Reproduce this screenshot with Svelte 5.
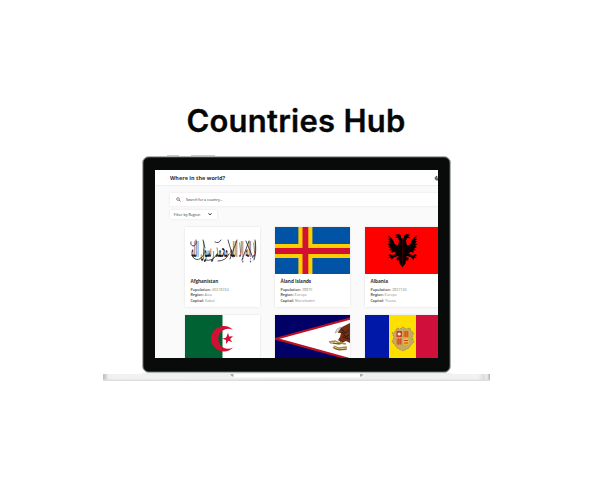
<script>
  const countries = [
    { name: 'Afghanistan', flag: 'af', population: '40218234', region: 'Asia', capital: 'Kabul' },
    { name: 'Åland Islands', flag: 'ax', population: '28875', region: 'Europe', capital: 'Mariehamn' },
    { name: 'Albania', flag: 'al', population: '2837743', region: 'Europe', capital: 'Tirana' },
    { flag: 'dz' },
    { flag: 'as' },
    { flag: 'ad' }
  ];
</script>

<main>
  <h1>Countries Hub</h1>
  <div class="laptop">
    <div class="buttons"><i></i><i></i></div>
    <div class="lid">
      <div class="screen">
        <header>
          <b>Where in the world?</b>
          <svg class="moon" width="6" height="6" viewBox="0 0 6 6"><path d="M3 1.200A2 2 0 1 0 4.800 4.200Q2.400 4.200 3 1.200Z" fill="#777" stroke="#111" stroke-width=".5" /></svg>
        </header>
        <div class="search">
          <svg width="5" height="5" viewBox="0 0 5 5"><circle cx="2" cy="2" r="1.4" fill="none" stroke="#444" stroke-width=".55" /><path d="M3 3L4.6 4.6" stroke="#444" stroke-width=".65" /></svg>
          <span>Search for a country...</span>
        </div>
        <div class="filter">
          <span>Filter by Region</span>
          <svg width="4" height="4" viewBox="0 0 4 4"><path d="M.4 1.200L2 3L3.6 1.200" fill="none" stroke="#222" stroke-width=".8" /></svg>
        </div>
        <div class="grid">
          {#each countries as c}
            <article>
              <svg class="flag" viewBox="0 0 75 47" preserveAspectRatio="none">
                {#if c.flag === 'af'}
                  <rect width="75" height="47" fill="#fff" />
                  <g transform="translate(6 29.5) scale(1 1.55)">
                    <text class="script" textLength="65" lengthAdjust="spacingAndGlyphs">لا إله إلا الله محمد رسول الله</text>
                  </g>
                  <g fill="none" stroke="#222" stroke-width=".8" stroke-linecap="round">
                    <path d="M7 29Q11 35 16 31Q20 28 19 22M20 33Q28 35 32 27M33 34Q41 34 44 27" />
                    <path d="M6 15Q5 18 8 19Q12 19 11 13M18 13L20 21M30 15Q34 17 36 13M43 13L48 30M52 13L45 32M64 14L57 33M61 14L68 31M70 13Q72 24 69 33" />
                  </g>
                {:else if c.flag === 'ax'}
                  <rect width="75" height="47" fill="#0053a5" />
                  <path d="M30.4 0V47M0 24H75" stroke="#ffce00" stroke-width="14" />
                  <path d="M30.4 0V47M0 24H75" stroke="#d21034" stroke-width="5.8" />
                {:else if c.flag === 'al'}
                  <rect width="75" height="47" fill="#f00" />
                  <g fill="#090000">
                    {#each [1, -1] as side}
                      <path transform={side === -1 ? 'translate(75 0) scale(-1 1)' : undefined} d="M37.6 12L36 10.500L36 8.500L33.500 7L29.500 8L32 9L30 11L33 11L34 14L33 18.500L30 17.500L28 13L25.500 10L23 8.500L25 12L22.500 11.500L25 14L22.500 14L25 16.500L22.500 17L25 19L23 20L26 21.500L24 23L27 23.500L26 25.500L30 25L31 27L27 28.200L24.500 27L23 29L25.500 29L23 31L26 30.500L26.500 33L28.500 30.500L33 29L34 30L31.500 31L32 34L34 33L34.500 36.500L37.600 40.500Z" />
                    {/each}
                  </g>
                {:else if c.flag === 'dz'}
                  <rect width="75" height="47" fill="#fff" /><rect width="37.500" height="47" fill="#006233" />
                  <path d="M48 15A12.700 12.700 0 1 0 48 32.600A10 10 0 1 1 48 15Z" fill="#d21034" />
                  <path d="M43 17.700L44.100 21.600L48 21.200L45.100 23.900L47.200 27.300L43.600 25.800L41 28.900L41.100 25L37.200 23.700L41.200 22.400Z" fill="#d21034" />
                {:else if c.flag === 'as'}
                  <rect width="75" height="47" fill="#006" />
                  <path d="M1 23.800L78 2.700V45Z" fill="#fff" stroke="#bd1021" stroke-width="2.200" />
                  <path d="M75 8L71 10L67 12L64 15L63 18L66 18L65 22L63 25L67 28L71 26L75 28Z" fill="#713015" />
                  <path d="M66 13L70 18L74 15M67 17L71 22L74 20M68 22L75 24" fill="none" stroke="#2f1009" stroke-width=".8" />
                  <path d="M66 12L62 14L60 18L64 16Z" fill="#ddd" stroke="#666" stroke-width=".4" />
                  <path d="M54 27L60 26L65 28L71 29M58 28L64 29L67 27" fill="none" stroke="#ad8a36" stroke-width="1.300" />
                  <path d="M58 32Q62 36 72 34M59 31L64 33L72 32" fill="none" stroke="#ad8a36" stroke-width="1.300" />
                  <path d="M55 28L66 29M59 33L64 35L71 34" fill="none" stroke="#493917" stroke-width=".6" />
                {:else}
                  <rect width="75" height="47" fill="#0018a8" /><rect x="24" width="27" height="47" fill="#fedf00" /><rect x="51" width="24" height="47" fill="#d0103a" />
                  <path d="M32 13L35 14L38 12L41 14L45 13L46 16L49 18L47 22L49 27L46 30L44 33L38 36L32 33L30 30L27 27L29 22L27 18L30 17Z" fill="#c4aa62" stroke="#a48846" stroke-width=".8" stroke-dasharray="2 1" />
                  <rect x="31.500" y="16" width="5.500" height="6" fill="#d9303b" /><circle cx="34.200" cy="19" r="1.600" fill="#fff0bd" />
                  <rect x="38.500" y="16" width="5" height="6" fill="#e37321" /><path d="M40.300 16V22M42.300 16V22" stroke="#b74c24" stroke-width=".7" />
                  <rect x="31.500" y="23.500" width="5.500" height="6" fill="#e37321" /><path d="M33.300 23.500V29.500M35.300 23.500V29.500" stroke="#c23b20" stroke-width=".7" />
                  <rect x="38.500" y="23.500" width="5" height="6" fill="#f2c71c" /><path d="M39 25.500H43M39 28H43" stroke="#cc3b22" />
                {/if}
              </svg>
              {#if c.name}
                <div class="info">
                  <h2>{c.name}</h2>
                  <p><b>Population:</b> {c.population}</p>
                  <p><b>Region:</b> {c.region}</p>
                  <p><b>Capital:</b> {c.capital}</p>
                </div>
              {/if}
            </article>
          {/each}
        </div>
      </div>
    </div>
    <div class="hinge"></div>
    <div class="base">
      <svg width="387" height="7" viewBox="0 0 387 7">
        <rect x="130" y="0" width="128" height="3.500" fill="#fff" />
        <path d="M127.500 0H130.500V3L128 1.500Z" fill="#aaa" /><path d="M257 0H260L259.500 1.500L257 3Z" fill="#aaa" />
      </svg>
    </div>
  </div>
</main>

<style>
  :global(body) { margin: 0; background: #fff; }
  main { width: 592px; height: 480px; overflow: hidden; background: #fff; display: flex; flex-direction: column; align-items: center; box-sizing: border-box; padding-top: 100px; }
  h1 { margin: 0; height: 41px; font: 600 31px/41px Inter, sans-serif; letter-spacing: .25px; color: #050706; white-space: nowrap; -webkit-text-stroke: .3px #050706; }
  .laptop { width: 387px; padding-top: 14px; display: flex; flex-direction: column; align-items: center; }
  .buttons { width: 308px; height: 1px; display: flex; gap: 12px; padding-left: 25px; box-sizing: border-box; }
  .buttons i { width: 12px; height: 1px; background: #c8cbcb; }
  .buttons i + i { width: 24px; }
  .lid { width: 309px; height: 217px; box-sizing: border-box; border: 1px solid #aeb2b1; border-radius: 7px; background: #080b0a; padding: 13px 12px 14px; box-shadow: inset 0 0 0 .5px #666; }
  .screen { width: 283px; height: 188px; overflow: hidden; background: #fafafa; font-family: "Open Sans", sans-serif; color: #333; }
  header { height: 15px; background: #fff; box-shadow: 0 .5px 1.5px #ddd; display: flex; align-items: center; padding-left: 15.500px; font-size: 5.500px; width: 290px; box-sizing: border-box; }
  header b { width: 264px; font-weight: 700; }
  .moon { flex: none; }
  .search { margin: 7.500px 0 0 15px; width: 285px; height: 13.500px; box-sizing: border-box; background: #fff; box-shadow: 0 0 2px #e5e5e5; display: flex; align-items: center; padding-left: 6px; gap: 5.500px; font-size: 3.600px; }
  .filter { margin: 3.500px 0 0 15px; width: 47px; height: 9.500px; box-sizing: border-box; background: #fff; box-shadow: 0 0 2px #e2e2e2; display: flex; align-items: center; justify-content: space-between; padding: 0 5px 0 4.300px; font-size: 3.700px; white-space: nowrap; }
  .grid { margin: 7.500px 0 0 30px; width: 256px; display: grid; grid-template-columns: repeat(3, 75px); column-gap: 15px; row-gap: 7.500px; }
  article { height: 80.500px; background: #fff; box-shadow: 0 0 2px #ddd; }
  .flag { display: block; width: 75px; height: 47px; }
  .script { font: 400 14px "DejaVu Sans", sans-serif; fill: #111; }
  .info { padding: 4px 6px; }
  h2 { margin: 0 0 3px; font-size: 4.700px; line-height: 6px; letter-spacing: -.05px; white-space: nowrap; }
  p { margin: 0; font-size: 3.700px; line-height: 5.700px; color: #888; white-space: nowrap; }
  p b { font-weight: 600; color: #444; }
  .hinge { width: 309px; height: 1px; background: #eee; }
  .base { width: 387px; height: 7px; background: linear-gradient(90deg, #bbb 0, #d5d5d5 3px, #eee 5px, #f2f2f2 12px, #eee 50%, #f2f2f2 375px, #ddd 381px, #eee 384px, #aaa 387px); box-shadow: inset 0 -1.500px 1px #ddd; }
  .base svg { display: block; }
</style>
